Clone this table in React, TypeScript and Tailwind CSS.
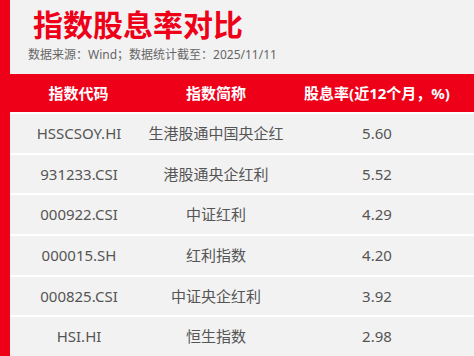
import React from "react";

const rows = [
  ["HSSCSOY.HI", "生港股通中国央企红", "5.60"],
  ["931233.CSI", "港股通央企红利", "5.52"],
  ["000922.CSI", "中证红利", "4.29"],
  ["000015.SH", "红利指数", "4.20"],
  ["000825.CSI", "中证央企红利", "3.92"],
  ["HSI.HI", "恒生指数", "2.98"],
];

export default function App() {
  return (
    <div
      className="w-[474px] h-[356px] overflow-hidden flex bg-white"
      style={{ fontFamily: '"Noto Sans", "Noto Sans CJK SC", sans-serif' }}
    >
      <div className="w-[10px] shrink-0 bg-[#ee0019]" />
      <div className="flex-1 flex flex-col bg-[#f2f2f2]">
        <div className="h-[48px] flex items-center pl-[23px] pt-[1px]">
          <span className="text-[30px] leading-none font-bold text-[#ee0019]" style={{ fontFamily: '"Noto Sans CJK SC", sans-serif' }}>
            指数股息率对比
          </span>
        </div>
        <div className="h-[18px] flex items-center pl-[18px] text-[12px] leading-none text-[#666666]">
          数据来源：Wind；数据统计截至：2025/11/11
        </div>
        <div className="h-[11px]" />
        <div className="h-[40px] flex items-center bg-[#ee0019] text-white font-bold text-[15px] -ml-px">
          <div className="w-[139px] text-center">指数代码</div>
          <div className="w-[136px] text-center">指数简称</div>
          <div className="w-[186px] text-center">股息率(近12个月，%)</div>
        </div>
        {rows.map((r, i) => (
          <div
            key={i}
            className="h-[40.7px] shrink-0 flex items-center text-[15px] text-[#555555] border-t-[2px] border-white first:border-t-0 first:h-[40px]"
          >
            <div className="w-[138px] text-center">{r[0]}</div>
            <div className="w-[136px] text-center">{r[1]}</div>
            <div className="w-[186px] text-center">{r[2]}</div>
          </div>
        ))}
      </div>
    </div>
  );
}
